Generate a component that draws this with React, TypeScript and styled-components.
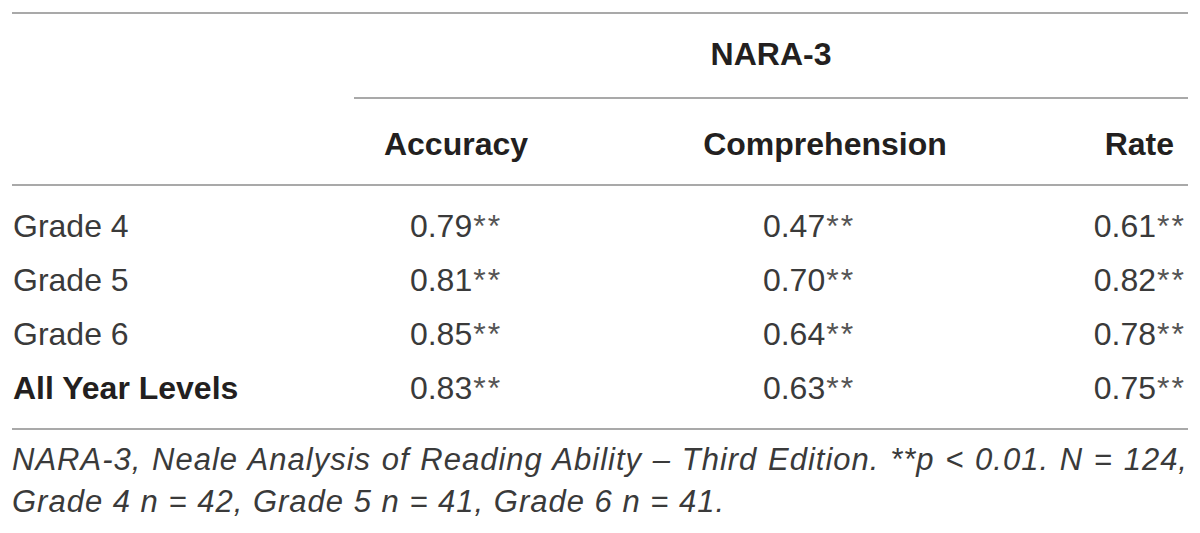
import styled, { createGlobalStyle } from 'styled-components';

const GlobalStyle = createGlobalStyle`
  html, body {
    margin: 0;
    padding: 0;
    background: #ffffff;
  }
  body {
    font-family: "Liberation Sans", Arial, sans-serif;
    color: #231f20;
  }
`;

const Page = styled.div`
  width: 1200px;
  height: 533px;
  box-sizing: border-box;
  padding: 12px 12px 0;
  overflow: hidden;
`;

const Table = styled.div`
  width: 1176px;
  border-top: 2px solid #a9a9a9;
  border-bottom: 2px solid #a9a9a9;
`;

const Row = styled.div`
  display: grid;
  grid-template-columns: 342px 204px 1fr 120px;
  font-size: 32px;
`;

const HeadRow = styled(Row)`
  border-bottom: 2px solid #a9a9a9;
`;

const BodyGroup = styled.div`
  padding: 13px 0;
`;

const GroupHead = styled.div`
  grid-column: 2 / 5;
  text-align: center;
  font-weight: 700;
  line-height: 37px;
  padding: 22px 0 24px;
  border-bottom: 2px solid #a9a9a9;
`;

const HeadCell = styled.div<{ $align?: 'left' | 'center' | 'right'; $pl?: number; $pr?: number }>`
  text-align: ${(p) => p.$align || 'center'};
  font-weight: 700;
  line-height: 37px;
  padding: 27px ${(p) => p.$pr || 0}px 21px ${(p) => p.$pl || 0}px;
  white-space: nowrap;
`;

const Cell = styled.div<{ $align?: 'left' | 'center' | 'right'; $pl?: number; $pr?: number; $bold?: boolean }>`
  text-align: ${(p) => p.$align || 'center'};
  font-weight: ${(p) => (p.$bold ? 700 : 400)};
  color: ${(p) => (p.$bold ? '#231f20' : '#3a3a3a')};
  line-height: 54px;
  padding: 0 ${(p) => p.$pr || 0}px 0 ${(p) => p.$pl || 0}px;
  white-space: nowrap;
`;

const Stars = styled.span`
  letter-spacing: 2px;
  margin-left: 1px;
  color: #555555;
`;

const Footnote = styled.p`
  margin: 9px 0 0;
  width: 1176px;
  font-size: 31px;
  line-height: 42px;
  font-style: italic;
  letter-spacing: 1px;
  color: #3a3a3a;
  text-align: justify;
`;

const rows = [
  { label: 'Grade 4', values: ['0.79', '0.47', '0.61'] },
  { label: 'Grade 5', values: ['0.81', '0.70', '0.82'] },
  { label: 'Grade 6', values: ['0.85', '0.64', '0.78'] },
  { label: 'All Year Levels', values: ['0.83', '0.63', '0.75'], bold: true },
];

const Value = ({ v }: { v: string }): JSX.Element => (
  <>
    {v}
    <Stars>**</Stars>
  </>
);

const App = (): JSX.Element => (
  <>
    <GlobalStyle />
    <Page>
      <Table>
        <Row>
          <GroupHead>NARA-3</GroupHead>
        </Row>
        <HeadRow>
          <HeadCell $align="left" />
          <HeadCell>Accuracy</HeadCell>
          <HeadCell $pl={24}>Comprehension</HeadCell>
          <HeadCell $align="right" $pr={14}>Rate</HeadCell>
        </HeadRow>
        <BodyGroup>
          {rows.map((r) => (
            <Row key={r.label}>
              <Cell $align="left" $pl={1} $bold={r.bold}>{r.label}</Cell>
              <Cell><Value v={r.values[0]} /></Cell>
              <Cell $pr={8}><Value v={r.values[1]} /></Cell>
              <Cell $align="right" $pr={2}><Value v={r.values[2]} /></Cell>
            </Row>
          ))}
        </BodyGroup>
      </Table>
      <Footnote>
        NARA-3, Neale Analysis of Reading Ability – Third Edition. **p &lt; 0.01. N = 124,
        Grade 4 n = 42, Grade 5 n = 41, Grade 6 n = 41.
      </Footnote>
    </Page>
  </>
);

export default App;
